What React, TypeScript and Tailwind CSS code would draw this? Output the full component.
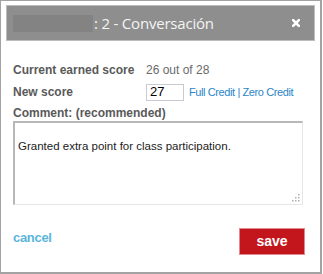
import { useState } from "react";

export default function App() {
    const [score, setScore] = useState("27");
    const [comment, setComment] = useState("Granted extra point for class participation.");

    return (
        <div className="w-[323px] h-[274px] bg-white">
            <div className="w-[322px] h-[274px] bg-white border-l border-t border-r-2 border-b-2 border-[#a3a3a3] pt-[4px] px-[5px] font-['Liberation_Sans',Arial,sans-serif]">
                {/* Title bar */}
                <div className="h-[36px] bg-[#8e8e8e] border border-[#bdbdbd] flex items-center pl-[6px] pr-[14px]">
                    <div className="w-[80px] h-[17px] bg-[#838383]" />
                    <span className="ml-[1px] text-[15px] text-[#f4f4f4] font-['Open_Sans',sans-serif] tracking-[-0.2px]">: 2 - Conversación</span>
                    <button className="ml-auto w-[9px] h-[9px] flex items-center justify-center">
                        <svg width="8" height="8" viewBox="0 0 8 8">
                            <path d="M1.2 1.2 L6.8 6.8 M6.8 1.2 L1.2 6.8" stroke="#ffffff" strokeWidth="2.6" strokeLinecap="square" />
                        </svg>
                    </button>
                </div>

                {/* Body */}
                <div className="pl-[7px] pr-[10px]">
                    <div className="mt-[22px] flex items-center h-[14px] text-[12px]">
                        <span className="w-[133px] font-bold text-[#5a5a5a]">Current earned score</span>
                        <span className="text-[#6a6a6a]">26 out of 28</span>
                    </div>
                    <div className="mt-[7px] flex items-center h-[16px] text-[12px]">
                        <span className="w-[133px] font-bold text-[#5a5a5a]">New score</span>
                        <input
                            value={score}
                            onChange={(e) => setScore(e.target.value)}
                            className="w-[38px] h-[17px] border border-[#c8ccd2] px-[3px] text-[13px] text-black outline-none"
                        />
                        <span className="ml-[5px] text-[11px] text-[#2a86c9] tracking-[-0.4px]">
                            <a href="#">Full Credit</a> | <a href="#">Zero Credit</a>
                        </span>
                    </div>
                    <div className="mt-[6px] h-[14px] flex items-center text-[12px] font-bold text-[#5a5a5a]">
                        Comment: (recommended)
                    </div>
                    <div className="relative mt-[1px] w-[290px]">
                        <textarea
                            value={comment}
                            onChange={(e) => setComment(e.target.value)}
                            className="block w-[290px] h-[84px] resize-none border-t-2 border-l-2 border-r border-b border-t-[#b8b8b8] border-l-[#b8b8b8] border-r-[#e6e6e6] border-b-[#e6e6e6] pt-[15px] pl-[3px] text-[11.5px] leading-[16px] text-[#222] outline-none"
                        />
                        <svg className="absolute right-[3px] bottom-[3px]" width="8" height="8" viewBox="0 0 8 8">
                            <g fill="#b0b0b0">
                                <rect x="6" y="0" width="1.5" height="1.5" />
                                <rect x="3" y="3" width="1.5" height="1.5" />
                                <rect x="6" y="3" width="1.5" height="1.5" />
                                <rect x="0" y="6" width="1.5" height="1.5" />
                                <rect x="3" y="6" width="1.5" height="1.5" />
                                <rect x="6" y="6" width="1.5" height="1.5" />
                            </g>
                        </svg>
                    </div>
                    <div className="mt-[23px] flex items-start justify-between">
                        <a href="#" className="text-[13px] font-bold text-[#5ab6dc] tracking-[-0.3px]">cancel</a>
                        <button className="w-[66px] h-[27px] bg-[#c3161c] border border-[#e08a8d] text-white text-[14px] font-bold">save</button>
                    </div>
                </div>
            </div>
        </div>
    );
}
